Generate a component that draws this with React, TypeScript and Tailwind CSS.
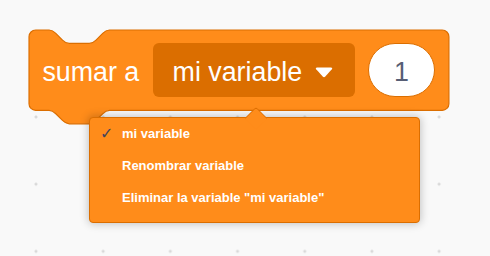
import React from 'react';

const BLOCK_PATH =
  'M 0,4 A 4,4 0 0,1 4,0 H 12 c 2,0 3,1 4,2 l 4,4 c 1,1 2,2 4,2 h 12 c 2,0 3,-1 4,-2 l 4,-4 c 1,-1 2,-2 4,-2 ' +
  'H 246.7 a 4,4 0 0,1 4,4 v 40 a 4,4 0 0,1 -4,4 ' +
  'H 48 c -2,0 -3,1 -4,2 l -4,4 c -1,1 -2,2 -4,2 h -12 c -2,0 -3,-1 -4,-2 l -4,-4 c -1,-1 -2,-2 -4,-2 ' +
  'H 4 a 4,4 0 0,1 -4,-4 z';

const menuItems = [
  { label: 'mi variable', checked: true },
  { label: 'Renombrar variable', checked: false },
  { label: 'Eliminar la variable "mi variable"', checked: false },
];

export default function App() {
  return (
    <div
      className="relative w-[490px] h-[256px] overflow-hidden bg-[#f9f9f9] bg-[radial-gradient(circle,#d9d9d9_1.2px,transparent_1.8px)] bg-[length:67.2px_67.2px] bg-[position:2.4px_16.2px] pt-[30px] pl-[29px]"
      style={{ fontFamily: '"Liberation Sans", Arial, sans-serif' }}
    >
      {/* Block */}
      <div className="relative w-[420px] h-[80.4px]">
        <svg className="absolute left-0 top-0 overflow-visible" width="420" height="81">
          <path
            transform="scale(1.675)"
            d={BLOCK_PATH}
            fill="#FF8C1A"
            stroke="#DB6E00"
            strokeWidth="0.7"
          />
        </svg>
        <div className="relative flex items-center h-full px-[13.4px] gap-[13.4px]">
          <span className="text-white text-[26.8px] mt-[3px] whitespace-nowrap">sumar a</span>
          <div className="flex items-center h-[54px] rounded-[6px] bg-[#DB6E00] pl-[20px] pr-[22px] gap-[12.5px]">
            <span className="text-white text-[26.8px] mt-[3px] whitespace-nowrap">mi variable</span>
            <svg width="18" height="11" viewBox="0 0 18 11" className="mt-[5px]">
              <path d="M2 0.5 H16 Q18 0.5 16.8 2.2 L10.3 9.6 Q9 11 7.7 9.6 L1.2 2.2 Q0 0.5 2 0.5 Z" fill="#ffffff" />
            </svg>
          </div>
          <div className="flex items-center justify-center w-[67px] h-[54px] rounded-full bg-white border border-[#DB6E00]">
            <span className="text-[#575E75] text-[26.8px] mt-[3px]">1</span>
          </div>
        </div>
      </div>

      {/* Dropdown menu */}
      <div className="absolute left-[89px] top-[117px] w-[331px] h-[106px] bg-[#FF8C1A] border border-[#DB6E00] rounded-[4px] shadow-[0_0_8px_1px_rgba(0,0,0,0.22)]">
        <div className="absolute left-[158px] top-[-8.5px] w-[16px] h-[16px] rotate-45 bg-[#FF8C1A] border-t border-l border-[#DB6E00] rounded-tl-[3px]" />
        <div className="relative flex flex-col">
          {menuItems.map((item) => (
            <div key={item.label} className="flex items-center h-[32px] pl-[10px]">
              <span
                className="w-[22px] text-[16px] leading-[16px] text-[#45455a]"
                style={{ fontFamily: '"DejaVu Sans", sans-serif' }}
              >
                {item.checked ? '✓' : ''}
              </span>
              <span className="text-white font-bold text-[13px] leading-[16px] whitespace-nowrap">{item.label}</span>
            </div>
          ))}
        </div>
      </div>
    </div>
  );
}
